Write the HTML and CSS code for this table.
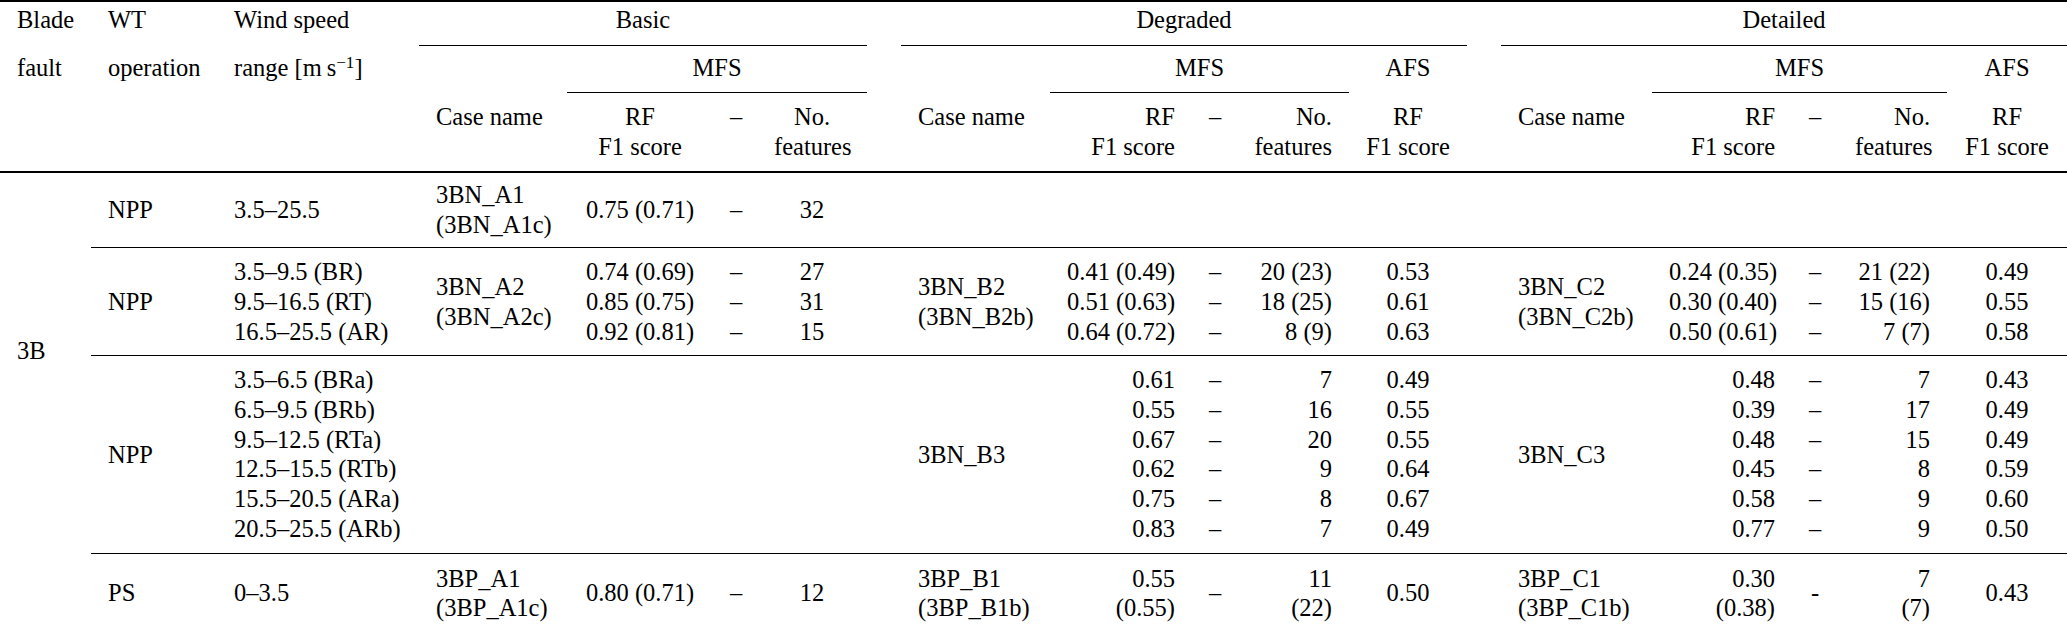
FILE: index.html
```html
<!DOCTYPE html>
<html>
<head>
<meta charset="utf-8">
<link rel="stylesheet" href="styles.css">
</head>
<body>
<table class="results">
  <colgroup>
    <col class="w-fault"><col class="w-op"><col class="w-range">
    <col class="w-case-a"><col class="w-rf-a"><col class="w-dash"><col class="w-no-a">
    <col class="w-gap">
    <col class="w-case-b"><col class="w-rf-b"><col class="w-dash"><col class="w-no-b"><col class="w-afs-b">
    <col class="w-gap">
    <col class="w-case-c"><col class="w-rf-c"><col class="w-dash-c"><col class="w-no-c"><col class="w-afs-c">
  </colgroup>
  <thead>
    <tr class="h1">
      <td>Blade</td><td>WT</td><td>Wind speed</td>
      <td colspan="4" class="ctr cmid">Basic</td>
      <td></td>
      <td colspan="5" class="ctr cmid">Degraded</td>
      <td></td>
      <td colspan="5" class="ctr cmid">Detailed</td>
    </tr>
    <tr class="h2">
      <td>fault</td><td>operation</td><td>range [m&#8201;s<sup>−1</sup>]</td>
      <td></td>
      <td colspan="3" class="ctr cmid">MFS</td>
      <td></td>
      <td></td>
      <td colspan="3" class="ctr cmid">MFS</td>
      <td class="ctr">AFS</td>
      <td></td>
      <td></td>
      <td colspan="3" class="ctr cmid">MFS</td>
      <td class="ctr">AFS</td>
    </tr>
    <tr class="h3">
      <td></td><td></td><td></td>
      <td>Case name</td>
      <td class="ctr">RF<br>F1 score</td>
      <td class="ctr">–</td>
      <td class="ctr">No.<br>features</td>
      <td></td>
      <td>Case name</td>
      <td class="rgt">RF<br>F1 score</td>
      <td class="ctr">–</td>
      <td class="rgt">No.<br>features</td>
      <td class="ctr">RF<br>F1 score</td>
      <td></td>
      <td>Case name</td>
      <td class="rgt">RF<br>F1 score</td>
      <td class="ctr">–</td>
      <td class="rgt">No.<br>features</td>
      <td class="ctr">RF<br>F1 score</td>
    </tr>
  </thead>
  <tbody>
    <tr class="g g-first">
      <td rowspan="4" class="fault">3B</td>
      <td>NPP</td>
      <td>3.5–25.5</td>
      <td>3BN_A1<br>(3BN_A1c)</td>
      <td class="ctr">0.75 (0.71)</td>
      <td class="ctr">–</td>
      <td class="ctr">32</td>
      <td></td>
      <td></td><td></td><td></td><td></td><td></td>
      <td></td>
      <td></td><td></td><td></td><td></td><td></td>
    </tr>
    <tr class="g sep">
      <td>NPP</td>
      <td>3.5–9.5 (BR)<br>9.5–16.5 (RT)<br>16.5–25.5 (AR)</td>
      <td>3BN_A2<br>(3BN_A2c)</td>
      <td class="ctr">0.74 (0.69)<br>0.85 (0.75)<br>0.92 (0.81)</td>
      <td class="ctr">–<br>–<br>–</td>
      <td class="ctr">27<br>31<br>15</td>
      <td></td>
      <td>3BN_B2<br>(3BN_B2b)</td>
      <td class="rgt">0.41 (0.49)<br>0.51 (0.63)<br>0.64 (0.72)</td>
      <td class="ctr">–<br>–<br>–</td>
      <td class="rgt">20 (23)<br>18 (25)<br>8 (9)</td>
      <td class="ctr">0.53<br>0.61<br>0.63</td>
      <td></td>
      <td>3BN_C2<br>(3BN_C2b)</td>
      <td class="rgt">0.24 (0.35)<br>0.30 (0.40)<br>0.50 (0.61)</td>
      <td class="ctr">–<br>–<br>–</td>
      <td class="rgt">21 (22)<br>15 (16)<br>7 (7)</td>
      <td class="ctr">0.49<br>0.55<br>0.58</td>
    </tr>
    <tr class="g sep">
      <td>NPP</td>
      <td>3.5–6.5 (BRa)<br>6.5–9.5 (BRb)<br>9.5–12.5 (RTa)<br>12.5–15.5 (RTb)<br>15.5–20.5 (ARa)<br>20.5–25.5 (ARb)</td>
      <td></td><td></td><td></td><td></td>
      <td></td>
      <td>3BN_B3</td>
      <td class="rgt">0.61<br>0.55<br>0.67<br>0.62<br>0.75<br>0.83</td>
      <td class="ctr">–<br>–<br>–<br>–<br>–<br>–</td>
      <td class="rgt">7<br>16<br>20<br>9<br>8<br>7</td>
      <td class="ctr">0.49<br>0.55<br>0.55<br>0.64<br>0.67<br>0.49</td>
      <td></td>
      <td>3BN_C3</td>
      <td class="rgt">0.48<br>0.39<br>0.48<br>0.45<br>0.58<br>0.77</td>
      <td class="ctr">–<br>–<br>–<br>–<br>–<br>–</td>
      <td class="rgt">7<br>17<br>15<br>8<br>9<br>9</td>
      <td class="ctr">0.43<br>0.49<br>0.49<br>0.59<br>0.60<br>0.50</td>
    </tr>
    <tr class="g sep g-last">
      <td>PS</td>
      <td>0–3.5</td>
      <td>3BP_A1<br>(3BP_A1c)</td>
      <td class="ctr">0.80 (0.71)</td>
      <td class="ctr">–</td>
      <td class="ctr">12</td>
      <td></td>
      <td>3BP_B1<br>(3BP_B1b)</td>
      <td class="rgt">0.55<br>(0.55)</td>
      <td class="ctr">–</td>
      <td class="rgt">11<br>(22)</td>
      <td class="ctr">0.50</td>
      <td></td>
      <td>3BP_C1<br>(3BP_C1b)</td>
      <td class="rgt">0.30<br>(0.38)</td>
      <td class="ctr">-</td>
      <td class="rgt">7<br>(7)</td>
      <td class="ctr">0.43</td>
    </tr>
  </tbody>
</table>
</body>
</html>
```
FILE: styles.css
```css
html, body {
  margin: 0;
  padding: 0;
  background: #ffffff;
  font-family: "Liberation Serif", "Times New Roman", Times, "DejaVu Serif", serif;
}

.results {
  width: 2067px;
  table-layout: fixed;
  border-collapse: collapse;
  border-top: 2px solid #000;
  border-bottom: 2px solid #000;
  font-family: "Liberation Serif", "Times New Roman", Times, "DejaVu Serif", serif;
  font-size: 24.5px;
  line-height: 29.7px;
  color: #000;
}

.results td {
  font-family: "Liberation Serif", "Times New Roman", Times, "DejaVu Serif", serif;
  padding: 0 17px;
  white-space: nowrap;
  vertical-align: middle;
  text-align: left;
}

.w-fault { width: 91px; }
.w-op { width: 126px; }
.w-range { width: 202px; }
.w-case-a { width: 148px; }
.w-rf-a { width: 146px; }
.w-dash { width: 44px; }
.w-no-a { width: 110px; }
.w-gap { width: 34px; }
.w-case-b { width: 149px; }
.w-rf-b { width: 142px; }
.w-no-b { width: 113px; }
.w-afs-b { width: 118px; }
.w-case-c { width: 151px; }
.w-rf-c { width: 140px; }
.w-dash-c { width: 46px; }
.w-no-c { width: 109px; }
.w-afs-c { width: 120px; }

.results .ctr { text-align: center; }
.results .rgt { text-align: right; }

.results sup {
  font-size: 0.7em;
  line-height: 0;
  vertical-align: 0.45em;
}

.results .cmid { border-bottom: 1px solid #000; }

.h1 td { padding-top: 3px; padding-bottom: 10px; }
.h2 td { padding-top: 7px; padding-bottom: 10px; }
.h3 td {
  vertical-align: top;
  padding-top: 9px;
  padding-bottom: 9px;
  border-bottom: 2px solid #000;
}

.g td { padding-top: 9px; padding-bottom: 9px; }
.g-first td { padding-top: 7px; padding-bottom: 8px; }
.sep td { border-top: 1.5px solid #000; }
.g-last td { padding-top: 10px; padding-bottom: 10px; }

.results td.fault {
  vertical-align: top;
  padding-top: 163px;
  border-top: none;
}
```
